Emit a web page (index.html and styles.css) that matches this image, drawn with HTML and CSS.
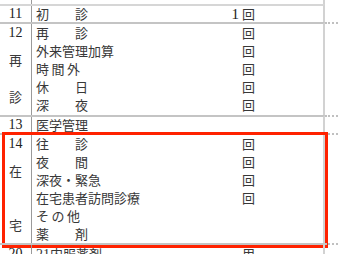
FILE: index.html
```html
<!DOCTYPE html>
<html lang="ja">
<head>
<meta charset="utf-8">
<link rel="stylesheet" href="styles.css">
</head>
<body>
<div class="sheet">
  <div class="grp prev">
    <div class="main"><div class="num"></div><div class="lines"></div></div>
    <div class="stub"></div>
  </div>

  <div class="grp g11">
    <div class="main first">
      <div class="num"><span class="no">11</span></div>
      <div class="lines">
        <div class="line short"><span class="label">初　　診</span><span class="cnt">1</span><span class="unit">回</span></div>
      </div>
    </div>
    <div class="stub nodash"></div>
  </div>

  <div class="grp g12">
    <div class="main">
      <div class="num">
        <span class="no">12</span>
        <div class="tag"><span>再</span><span>診</span></div>
      </div>
      <div class="lines">
        <div class="line"><span class="label">再　　診</span><span class="cnt"></span><span class="unit">回</span></div>
        <div class="line"><span class="label">外来管理加算</span><span class="cnt"></span><span class="unit">回</span></div>
        <div class="line"><span class="label spaced">時間外</span><span class="cnt"></span><span class="unit">回</span></div>
        <div class="line"><span class="label">休　　日</span><span class="cnt"></span><span class="unit">回</span></div>
        <div class="line"><span class="label">深　　夜</span><span class="cnt"></span><span class="unit">回</span></div>
      </div>
    </div>
    <div class="stub"></div>
  </div>

  <div class="grp g13">
    <div class="main">
      <div class="num"><span class="no">13</span></div>
      <div class="lines">
        <div class="line short"><span class="label">医学管理</span></div>
      </div>
    </div>
    <div class="stub"></div>
  </div>

  <div class="grp g14">
    <div class="main">
      <div class="num">
        <span class="no">14</span>
        <div class="tag"><span>在</span><span>宅</span></div>
      </div>
      <div class="lines">
        <div class="line"><span class="label">往　　診</span><span class="cnt"></span><span class="unit">回</span></div>
        <div class="line"><span class="label">夜　　間</span><span class="cnt"></span><span class="unit">回</span></div>
        <div class="line"><span class="label">深夜・緊急</span><span class="cnt"></span><span class="unit">回</span></div>
        <div class="line"><span class="label">在宅患者訪問診療</span><span class="cnt"></span><span class="unit">回</span></div>
        <div class="line"><span class="label spaced">その他</span></div>
        <div class="line"><span class="label">薬　　剤</span></div>
      </div>
    </div>
    <div class="stub"></div>
    <div class="highlight"></div>
  </div>

  <div class="grp g20">
    <div class="main">
      <div class="num"><span class="no">20</span></div>
      <div class="lines">
        <div class="line"><span class="label"><span class="digit">21</span>内服薬剤</span><span class="cnt"></span><span class="unit">用</span></div>
      </div>
    </div>
    <div class="stub"></div>
  </div>
</div>
</body>
</html>
```

FILE: styles.css
```css
html, body {
  margin: 0;
  padding: 0;
  background: #ffffff;
  overflow: hidden;
}

.sheet {
  width: 338px;
  height: 254px;
  overflow: hidden;
  font-family: "Noto Sans CJK JP", "Noto Sans", sans-serif;
  font-size: 13px;
  color: #383838;
}

.grp {
  display: flex;
  position: relative;
}

.main {
  width: 325px;
  box-sizing: border-box;
  display: flex;
  border-top: 2px solid #c4c4c4;
  border-right: 2px solid #d2d2d2;
}

.main.first {
  border-top-color: #d6d6d6;
}

.prev .main {
  border-top: none;
  height: 4px;
}

.stub {
  flex: 1;
  border-top: 2px dotted #c0c0c0;
}

.prev .stub,
.stub.nodash {
  border-top: none;
}

.num {
  width: 31px;
  flex: none;
  border-right: 1px solid #9a9a9a;
  display: flex;
  flex-direction: column;
  align-items: center;
}

.no {
  font-family: "Liberation Serif", serif;
  font-size: 14px;
  line-height: 18px;
  height: 18px;
  color: #222;
}

.g11 .no,
.g13 .no {
  line-height: 16px;
  height: 16px;
}

.tag {
  flex: 1;
  display: flex;
  flex-direction: column;
  justify-content: space-between;
  padding: 9px 0;
  line-height: 18px;
}

.lines {
  flex: 1;
  padding: 0 68px 0 4px;
}

.g12 .lines {
  padding-bottom: 1px;
}

.line {
  display: flex;
  align-items: center;
  height: 18px;
  line-height: 18px;
  white-space: nowrap;
}

.line.short {
  height: 16px;
  line-height: 16px;
}

.label {
  flex: 1;
}

.label.spaced {
  letter-spacing: 2.5px;
}

.digit {
  font-family: "Liberation Serif", serif;
  font-size: 14px;
}

.cnt {
  width: 20px;
  text-align: right;
  font-family: "Liberation Serif", serif;
  font-size: 15px;
  color: #222;
}

.unit {
  width: 13px;
  margin-left: 3px;
}

.g20 .main {
  height: 20px;
}

.highlight {
  position: absolute;
  left: 2px;
  top: -1px;
  width: 326px;
  height: 116px;
  box-sizing: border-box;
  border: 3px solid #ff2200;
  pointer-events: none;
}
```
